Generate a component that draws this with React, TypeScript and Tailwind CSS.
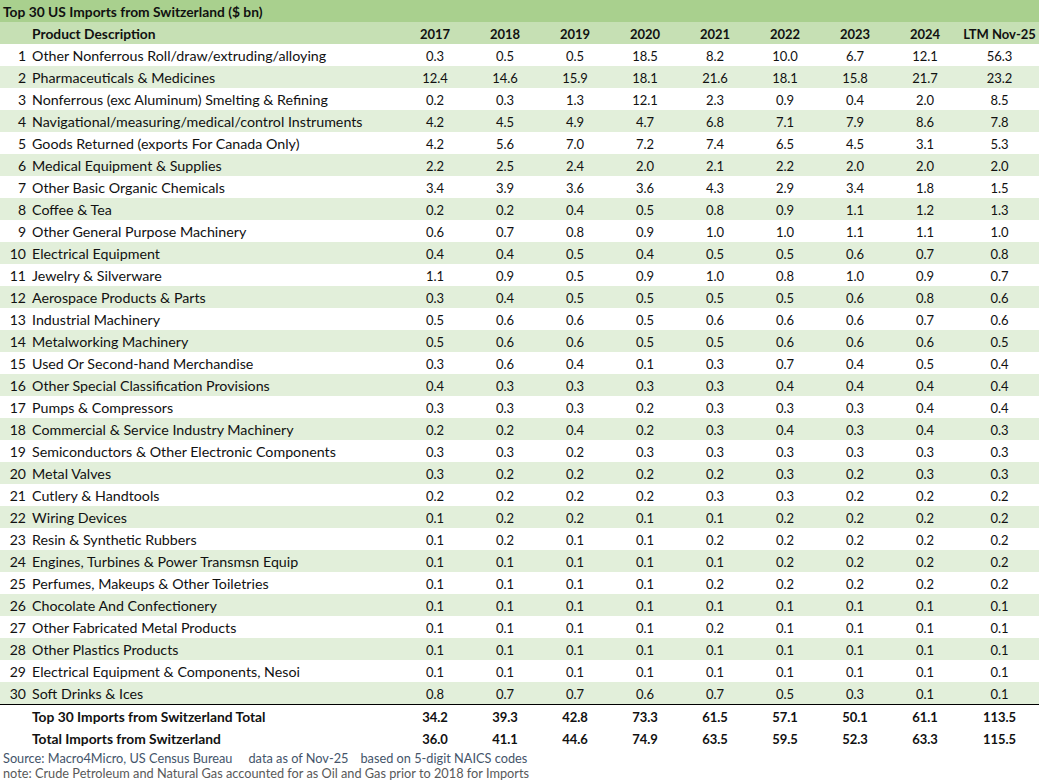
const years = ['2017', '2018', '2019', '2020', '2021', '2022', '2023', '2024', 'LTM Nov-25'];

const rows: [string, string][] = [
  ['Other Nonferrous Roll/draw/extruding/alloying', '0.3 0.5 0.5 18.5 8.2 10.0 6.7 12.1 56.3'],
  ['Pharmaceuticals & Medicines', '12.4 14.6 15.9 18.1 21.6 18.1 15.8 21.7 23.2'],
  ['Nonferrous (exc Aluminum) Smelting & Refining', '0.2 0.3 1.3 12.1 2.3 0.9 0.4 2.0 8.5'],
  ['Navigational/measuring/medical/control Instruments', '4.2 4.5 4.9 4.7 6.8 7.1 7.9 8.6 7.8'],
  ['Goods Returned (exports For Canada Only)', '4.2 5.6 7.0 7.2 7.4 6.5 4.5 3.1 5.3'],
  ['Medical Equipment & Supplies', '2.2 2.5 2.4 2.0 2.1 2.2 2.0 2.0 2.0'],
  ['Other Basic Organic Chemicals', '3.4 3.9 3.6 3.6 4.3 2.9 3.4 1.8 1.5'],
  ['Coffee & Tea', '0.2 0.2 0.4 0.5 0.8 0.9 1.1 1.2 1.3'],
  ['Other General Purpose Machinery', '0.6 0.7 0.8 0.9 1.0 1.0 1.1 1.1 1.0'],
  ['Electrical Equipment', '0.4 0.4 0.5 0.4 0.5 0.5 0.6 0.7 0.8'],
  ['Jewelry & Silverware', '1.1 0.9 0.5 0.9 1.0 0.8 1.0 0.9 0.7'],
  ['Aerospace Products & Parts', '0.3 0.4 0.5 0.5 0.5 0.5 0.6 0.8 0.6'],
  ['Industrial Machinery', '0.5 0.6 0.6 0.5 0.6 0.6 0.6 0.7 0.6'],
  ['Metalworking Machinery', '0.5 0.6 0.6 0.5 0.5 0.6 0.6 0.6 0.5'],
  ['Used Or Second-hand Merchandise', '0.3 0.6 0.4 0.1 0.3 0.7 0.4 0.5 0.4'],
  ['Other Special Classification Provisions', '0.4 0.3 0.3 0.3 0.3 0.4 0.4 0.4 0.4'],
  ['Pumps & Compressors', '0.3 0.3 0.3 0.2 0.3 0.3 0.3 0.4 0.4'],
  ['Commercial & Service Industry Machinery', '0.2 0.2 0.4 0.2 0.3 0.4 0.3 0.4 0.3'],
  ['Semiconductors & Other Electronic Components', '0.3 0.3 0.2 0.3 0.3 0.3 0.3 0.3 0.3'],
  ['Metal Valves', '0.3 0.2 0.2 0.2 0.2 0.3 0.2 0.3 0.3'],
  ['Cutlery & Handtools', '0.2 0.2 0.2 0.2 0.3 0.3 0.2 0.2 0.2'],
  ['Wiring Devices', '0.1 0.2 0.2 0.1 0.1 0.2 0.2 0.2 0.2'],
  ['Resin & Synthetic Rubbers', '0.1 0.2 0.1 0.1 0.2 0.2 0.2 0.2 0.2'],
  ['Engines, Turbines & Power Transmsn Equip', '0.1 0.1 0.1 0.1 0.1 0.2 0.2 0.2 0.2'],
  ['Perfumes, Makeups & Other Toiletries', '0.1 0.1 0.1 0.1 0.2 0.2 0.2 0.2 0.2'],
  ['Chocolate And Confectionery', '0.1 0.1 0.1 0.1 0.1 0.1 0.1 0.1 0.1'],
  ['Other Fabricated Metal Products', '0.1 0.1 0.1 0.1 0.2 0.1 0.1 0.1 0.1'],
  ['Other Plastics Products', '0.1 0.1 0.1 0.1 0.1 0.1 0.1 0.1 0.1'],
  ['Electrical Equipment & Components, Nesoi', '0.1 0.1 0.1 0.1 0.1 0.1 0.1 0.1 0.1'],
  ['Soft Drinks & Ices', '0.8 0.7 0.7 0.6 0.7 0.5 0.3 0.1 0.1'],
];

const totals: [string, string][] = [
  ['Top 30 Imports from Switzerland Total', '34.2 39.3 42.8 73.3 61.5 57.1 50.1 61.1 113.5'],
  ['Total Imports from Switzerland', '36.0 41.1 44.6 74.9 63.5 59.5 52.3 63.3 115.5'],
];

const grid = 'grid grid-cols-[26px_374px_repeat(8,70px)_79px] h-[22px] pt-[2px] items-center';

export default function App() {
  return (
    <div className="w-[1039px] h-[780px] bg-white text-[#111] text-[13px] leading-none font-['Lato','Open_Sans',sans-serif] overflow-hidden">
      <div className="h-[22px] bg-[#a9d08e] flex items-center pt-[2px] pl-[3px] font-bold text-[13.8px]">
        Top 30 US Imports from Switzerland ($ bn)
      </div>
      <div className={`${grid} bg-[#c6e0b4] font-bold`}>
        <div />
        <div className="pl-[6px] text-[13.8px]">Product Description</div>
        {years.map((y) => (
          <div key={y} className="text-center">{y}</div>
        ))}
      </div>
      {rows.map(([name, vals], i) => (
        <div key={name} className={`${grid} ${i % 2 ? 'bg-[#e2efda]' : 'bg-white'}`}>
          <div className="text-right text-[14px]">{i + 1}</div>
          <div className="pl-[6px] whitespace-nowrap text-[14.25px]">{name}</div>
          {vals.split(' ').map((v, j) => (
            <div key={j} className="text-center">{v}</div>
          ))}
        </div>
      ))}
      <div className="h-px bg-black" />
      {totals.map(([name, vals]) => (
        <div key={name} className={`${grid} font-bold`}>
          <div />
          <div className="pl-[6px] text-[13.8px]">{name}</div>
          {vals.split(' ').map((v, j) => (
            <div key={j} className="text-center">{v}</div>
          ))}
        </div>
      ))}
      <div className="pl-[3px] pt-[2px] text-[#44546a] text-[12.75px] h-[16px] flex items-center whitespace-nowrap">
        <span>Source: Macro4Micro, US Census Bureau</span>
        <span className="ml-[16px]">data as of Nov-25</span>
        <span className="ml-[12px]">based on 5-digit NAICS codes</span>
      </div>
      <div className="pl-[3px] text-[#595959] text-[12.75px] h-[16px] flex items-center">
        note: Crude Petroleum and Natural Gas accounted for as Oil and Gas prior to 2018 for Imports
      </div>
    </div>
  );
}
